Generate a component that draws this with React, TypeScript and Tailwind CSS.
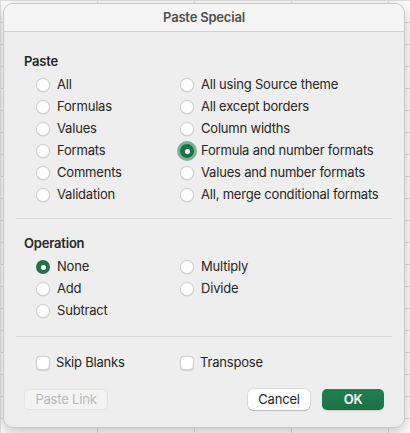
import React from 'react';

const font = { fontFamily: 'Inter, "Noto Sans", sans-serif' };

function Radio({ checked = false, focused = false }: { checked?: boolean; focused?: boolean }) {
  if (checked) {
    return (
      <span
        className={`flex h-[14px] w-[14px] shrink-0 items-center justify-center rounded-full bg-[#1f7247] ${
          focused ? 'ring-[3px] ring-[#7fb096]' : ''
        }`}
      >
        <span className="h-[5px] w-[5px] rounded-full bg-white" />
      </span>
    );
  }
  return (
    <span className="h-[14px] w-[14px] shrink-0 rounded-full border border-[#cfcfcf] bg-white shadow-[0_0.5px_1px_rgba(0,0,0,0.12)]" />
  );
}

function Option({ label, checked, focused }: { label: string; checked?: boolean; focused?: boolean }) {
  return (
    <div className="flex h-[22px] items-center gap-[7px]">
      <Radio checked={checked} focused={focused} />
      <span>{label}</span>
    </div>
  );
}

function Checkbox({ label }: { label: string }) {
  return (
    <div className="flex h-[22px] items-center gap-[6px]">
      <span className="h-[14px] w-[14px] rounded-[4px] border border-[#cfcfcf] bg-white shadow-[0_0.5px_1px_rgba(0,0,0,0.12)]" />
      <span>{label}</span>
    </div>
  );
}

const pasteLeft = ['All', 'Formulas', 'Values', 'Formats', 'Comments', 'Validation'];
const pasteRight = [
  'All using Source theme',
  'All except borders',
  'Column widths',
  'Formula and number formats',
  'Values and number formats',
  'All, merge conditional formats',
];

export default function App() {
  return (
    <div
      className="h-[433px] w-[410px] overflow-hidden bg-white bg-[linear-gradient(#e2e2e2_1px,transparent_1px),linear-gradient(90deg,#e2e2e2_1px,transparent_1px)] bg-[size:97px_22px] p-[3px] pr-[5px] text-[13px] tracking-[-0.2px] text-[#262626]"
      style={font}
    >
      <div className="flex h-[425px] flex-col overflow-hidden rounded-[10px] border border-[#c9c9c9] bg-[#eeeeee] shadow-[0_4px_16px_rgba(0,0,0,0.25)]">
        <div className="flex h-[28px] shrink-0 items-center justify-center border-b border-[#d0d0d0] bg-[#f5f5f5] font-semibold text-[#4f4f4f]">
          Paste Special
        </div>

        <div className="px-[12px]">
          <div className="mt-[21px] px-[8px] font-semibold leading-4">Paste</div>
          <div className="mt-[5px] flex pl-[20px]">
            <div className="w-[144px]">
              {pasteLeft.map((l) => (
                <Option key={l} label={l} />
              ))}
            </div>
            <div>
              {pasteRight.map((l) => (
                <Option key={l} label={l} checked={l === 'Formula and number formats'} focused />
              ))}
            </div>
          </div>
          <div className="mt-[12px] h-px bg-[#d8d8d8]" />

          <div className="mt-[16px] px-[8px] font-semibold leading-4">Operation</div>
          <div className="mt-[5px] flex pl-[20px]">
            <div className="w-[144px]">
              <Option label="None" checked />
              <Option label="Add" />
              <Option label="Subtract" />
            </div>
            <div>
              <Option label="Multiply" />
              <Option label="Divide" />
            </div>
          </div>
          <div className="mt-[14px] h-px bg-[#d8d8d8]" />

          <div className="mt-[15px] flex pl-[20px]">
            <div className="w-[144px]">
              <Checkbox label="Skip Blanks" />
            </div>
            <Checkbox label="Transpose" />
          </div>

          <div className="mt-[15px] flex items-center px-[8px]">
            <button className="h-[21px] w-[84px] rounded-[5px] border border-[#e4e4e4] bg-[#f3f3f3] text-[#b9b9b9]">
              Paste Link
            </button>
            <div className="ml-auto flex gap-[12px]">
              <button className="h-[21px] w-[62px] rounded-[5px] bg-white shadow-[0_0_0_0.5px_rgba(0,0,0,0.15),0_1px_1px_rgba(0,0,0,0.15)]">
                Cancel
              </button>
              <button className="h-[21px] w-[62px] rounded-[5px] bg-[linear-gradient(#21804f,#1a7245)] font-semibold text-white shadow-[0_1px_1px_rgba(0,0,0,0.15)]">
                OK
              </button>
            </div>
          </div>
        </div>
      </div>
    </div>
  );
}
